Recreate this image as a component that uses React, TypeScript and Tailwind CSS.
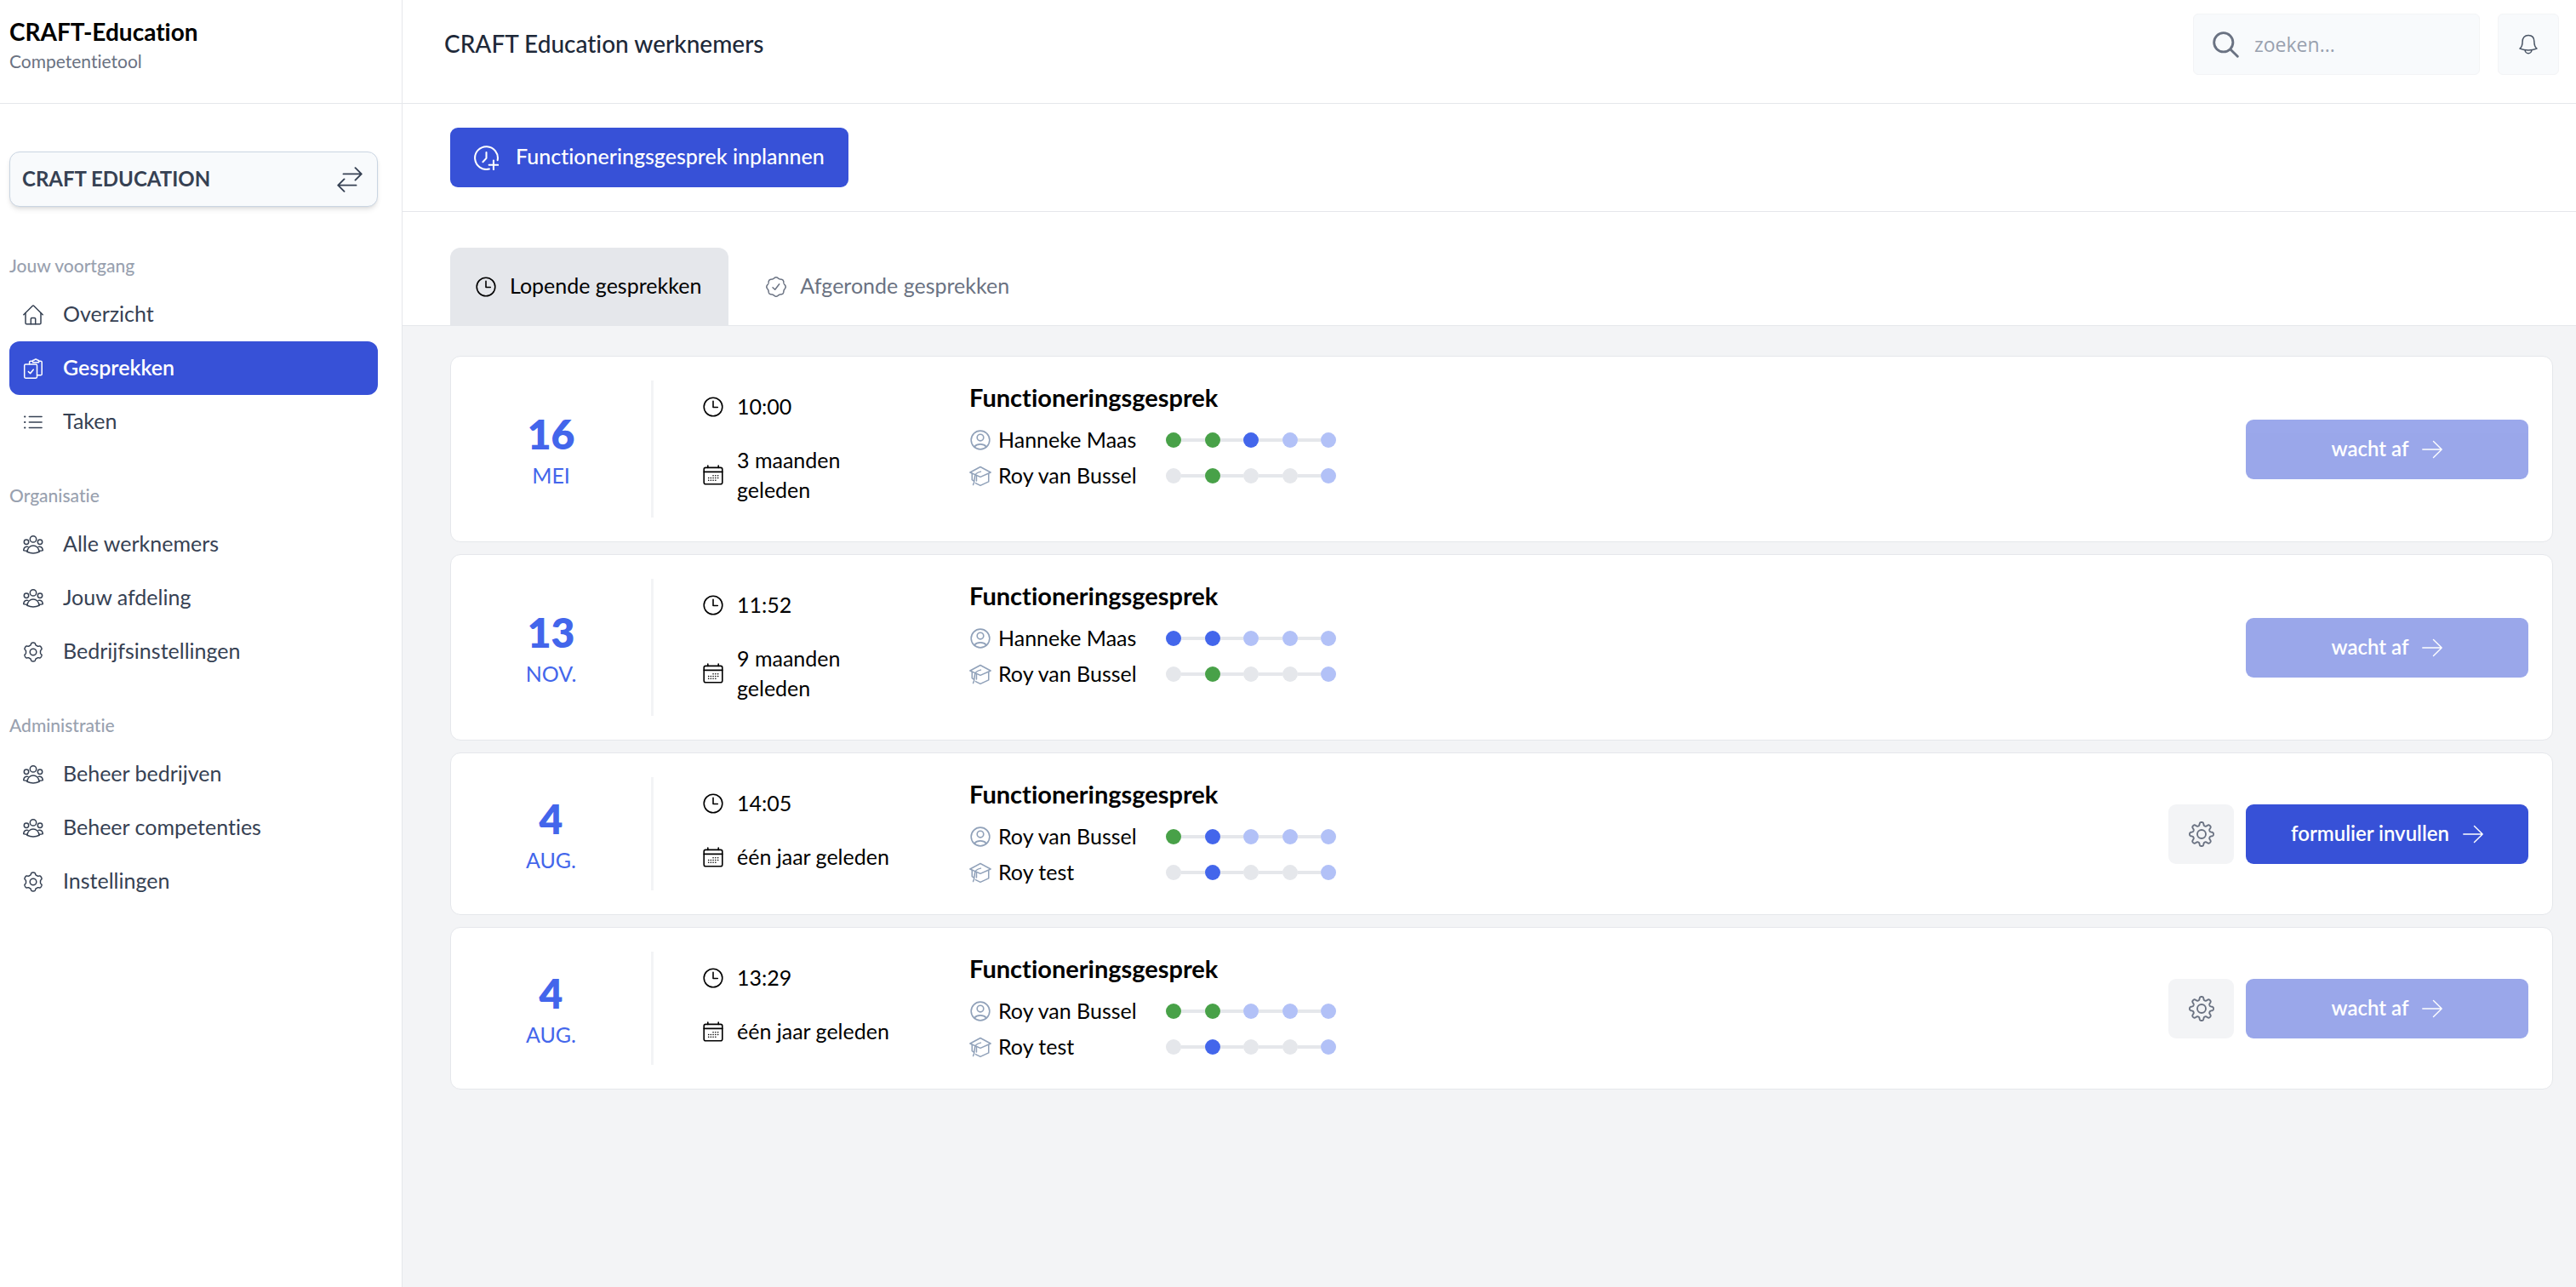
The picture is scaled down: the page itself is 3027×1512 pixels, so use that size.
import { ReactNode, useState } from 'react';
import clsx from 'clsx';

type IconProps = { className?: string };
type StepState = 'done' | 'active' | 'open' | 'none';
type Person = { name: string; steps: StepState[] };
type Meeting = {
  day: string;
  month: string;
  time: string;
  ago: string;
  employee: Person;
  coach: Person;
  action: 'wait' | 'fill';
  editable: boolean;
};

const meetings: Meeting[] = [
  {
    day: '16',
    month: 'MEI',
    time: '10:00',
    ago: '3 maanden geleden',
    employee: { name: 'Hanneke Maas', steps: ['done', 'done', 'active', 'open', 'open'] },
    coach: { name: 'Roy van Bussel', steps: ['none', 'done', 'none', 'none', 'open'] },
    action: 'wait',
    editable: false
  },
  {
    day: '13',
    month: 'NOV.',
    time: '11:52',
    ago: '9 maanden geleden',
    employee: { name: 'Hanneke Maas', steps: ['active', 'active', 'open', 'open', 'open'] },
    coach: { name: 'Roy van Bussel', steps: ['none', 'done', 'none', 'none', 'open'] },
    action: 'wait',
    editable: false
  },
  {
    day: '4',
    month: 'AUG.',
    time: '14:05',
    ago: 'één jaar geleden',
    employee: { name: 'Roy van Bussel', steps: ['done', 'active', 'open', 'open', 'open'] },
    coach: { name: 'Roy test', steps: ['none', 'active', 'none', 'none', 'open'] },
    action: 'fill',
    editable: true
  },
  {
    day: '4',
    month: 'AUG.',
    time: '13:29',
    ago: 'één jaar geleden',
    employee: { name: 'Roy van Bussel', steps: ['done', 'done', 'open', 'open', 'open'] },
    coach: { name: 'Roy test', steps: ['none', 'active', 'none', 'none', 'open'] },
    action: 'wait',
    editable: true
  }
];

// Closed outline with n rounded lobes around the centre of a 24x24 box
function lobes(n: number, radius: number, depth: number, sharpness: number) {
  const points: string[] = [];
  for (let i = 0; i < 240; i++) {
    const t = (i / 240) * Math.PI * 2;
    const r = radius + (depth * Math.tanh(sharpness * Math.cos(n * t))) / Math.tanh(sharpness);
    points.push(`${(12 + r * Math.sin(t)).toFixed(2)} ${(12 - r * Math.cos(t)).toFixed(2)}`);
  }
  return `M${points.join('L')}Z`;
}

function Icon({ className, width = 1.5, children }: IconProps & { width?: number; children: ReactNode }) {
  return (
    <svg
      viewBox="0 0 24 24"
      fill="none"
      stroke="currentColor"
      strokeWidth={width}
      strokeLinecap="round"
      strokeLinejoin="round"
      aria-hidden="true"
      className={className}
    >
      {children}
    </svg>
  );
}

const HomeIcon = ({ className }: IconProps) => (
  <Icon className={className}>
    <path d="M.8 11.8 11.1 1.5a1.3 1.3 0 0 1 1.8 0l10.3 10.3" />
    <path d="M3 9.8v11.7a1.3 1.3 0 0 0 1.3 1.3h15.4a1.3 1.3 0 0 0 1.3-1.3V9.8" />
    <path d="M9.3 22.7v-6a1.2 1.2 0 0 1 1.2-1.2h3a1.2 1.2 0 0 1 1.2 1.2v6" />
  </Icon>
);

const ClipboardsIcon = ({ className }: IconProps) => (
  <Icon className={className}>
    <rect x="1.7" y="7" width="14.8" height="16.2" rx="1.4" />
    <path d="m6.4 15.6 2.2 2.2 3.6-4.6" />
    <path d="M7.6 6.8V4.6a1.4 1.4 0 0 1 1.4-1.4h2.3" />
    <path d="M18.8 3.2h2a1.4 1.4 0 0 1 1.4 1.4v13.8a1.4 1.4 0 0 1-1.4 1.4h-4.2" />
    <path d="M11.5 4.8V3.2a1.2 1.2 0 0 1 1.2-1.2h.9a1.6 1.6 0 0 1 2.9 0h.9a1.2 1.2 0 0 1 1.2 1.2v1.6z" />
  </Icon>
);

const ListIcon = ({ className }: IconProps) => (
  <Icon className={className}>
    <path d="M7.3 5.6h14.8M7.3 12h14.8M7.3 18.4h14.8" />
    <path d="M2 5.6h.4M2 12h.4M2 18.4h.4" strokeWidth="2" />
  </Icon>
);

const PeopleIcon = ({ className }: IconProps) => (
  <Icon className={className}>
    <circle cx="12" cy="5.4" r="3.7" />
    <circle cx="4" cy="8.7" r="2.7" />
    <circle cx="20" cy="8.7" r="2.7" />
    <path d="M4.8 20.3c.6-4.4 3.500-7.300 7.200-7.300s6.600 2.900 7.200 7.300c-4.400 2-10 2-14.400 0z" />
    <path d="M5.900 14.400c-2.800-.9-4.900.8-5.200 4.200 1.300.5 2.600.6 4.100.6M18.100 14.400c2.800-.9 4.900.8 5.200 4.200-1.300.5-2.600.6-4.100.6" />
  </Icon>
);

const CogIcon = ({ className }: IconProps) => (
  <Icon className={className}>
    <path d={lobes(6, 9.7, 1.2, 2.2)} />
    <circle cx="12" cy="12" r="3.8" />
  </Icon>
);

const GearIcon = ({ className }: IconProps) => (
  <Icon className={className}>
    <path d={lobes(8, 9.7, 1.5, 1.8)} />
    <circle cx="12" cy="12" r="4" />
  </Icon>
);

const SwapIcon = ({ className }: IconProps) => (
  <Icon className={className}>
    <path d="M6 6.700h17M17.200.9 23 6.700l-5.800 5.800" />
    <path d="M18 17.300H1M6.800 11.500 1 17.300l5.800 5.800" />
  </Icon>
);

const SearchIcon = ({ className }: IconProps) => (
  <Icon className={className} width={2.2}>
    <circle cx="9.900" cy="9.900" r="8.600" />
    <path d="m16.200 16.200 6.500 6.500" />
  </Icon>
);

const BellIcon = ({ className }: IconProps) => (
  <Icon className={className}>
    <path d="M12 1.500c-4.300 0-6.900 2.900-6.900 7.400 0 4.200-.8 6.300-3.100 8.200 6.400 2.300 13.600 2.300 20 0-2.300-1.900-3.100-4-3.100-8.200 0-4.500-2.600-7.400-6.900-7.400z" />
    <path d="M8.200 18.900a3.800 3.800 0 0 0 7.600 0" />
  </Icon>
);

const ClockIcon = ({ className }: IconProps) => (
  <Icon className={className} width={1.6}>
    <circle cx="12" cy="12" r="10.800" />
    <path d="M12 5.200V12.500h5.300" />
  </Icon>
);

const ClockPlusIcon = ({ className }: IconProps) => (
  <Icon className={className} width={1.7}>
    <path d="M22.900 14.200A11.100 11.100 0 1 0 14.800 22.800" />
    <path d="M12 6.700v5.600l-3.400 3.600" />
    <path d="M19 14.500v8.800M14.600 18.900h8.800" />
  </Icon>
);

const BadgeIcon = ({ className }: IconProps) => (
  <Icon className={className}>
    <path d={lobes(8, 10.600, 0.6, 0.4)} />
    <path d="m8 12.700 2.700 2.600 5-6.500" />
  </Icon>
);

const CalendarIcon = ({ className }: IconProps) => (
  <Icon className={className} width={1.6}>
    <rect x="1.200" y="3.400" width="21.600" height="19.400" rx="2" />
    <path d="M1.200 8.400h21.600M5.800 1v2.400M18.200 1v2.400" />
    <path
      d="M12 12.700h.1M14.800 12.700h.1M17.600 12.700h.1M6.600 15.500h.1M9.300 15.500h.1M12 15.500h.1M14.800 15.500h.1M17.600 15.500h.1M6.600 18.300h.1M9.300 18.300h.1M12 18.300h.1M14.800 18.300h.1"
      strokeWidth="1.500"
    />
  </Icon>
);

const UserIcon = ({ className }: IconProps) => (
  <Icon className={className}>
    <circle cx="12" cy="12" r="10" />
    <circle cx="12" cy="9.300" r="3.500" />
    <path d="M5.400 19.300c3.200-3.700 10-3.700 13.200 0" />
  </Icon>
);

const GraduationIcon = ({ className }: IconProps) => (
  <Icon className={className} width={1.400}>
    <path d="M12 2.300.8 8.300 12 13.300l11.200-5z" />
    <path d="M21 10v8.300l-9 4.200-5.200-2.600" />
    <path d="M12.400 7.500C8.700 8.200 6 10 5.800 13.500l-.6 5.300M3 9.800v6.500l2.200 1.500M7.800 12.500v5M5 19.500l-.8 2.300" />
  </Icon>
);

const ArrowIcon = ({ className }: IconProps) => (
  <Icon className={className} width={1.400}>
    <path d="M.8 12h22.400M13.500 2.500l9.700 9.500-9.700 9.500" />
  </Icon>
);

const navigation = [
  {
    title: 'Jouw voortgang',
    items: [
      { label: 'Overzicht', icon: HomeIcon },
      { label: 'Gesprekken', icon: ClipboardsIcon },
      { label: 'Taken', icon: ListIcon }
    ]
  },
  {
    title: 'Organisatie',
    items: [
      { label: 'Alle werknemers', icon: PeopleIcon },
      { label: 'Jouw afdeling', icon: PeopleIcon },
      { label: 'Bedrijfsinstellingen', icon: CogIcon }
    ]
  },
  {
    title: 'Administratie',
    items: [
      { label: 'Beheer bedrijven', icon: PeopleIcon },
      { label: 'Beheer competenties', icon: PeopleIcon },
      { label: 'Instellingen', icon: CogIcon }
    ]
  }
];

function Sidebar() {
  const current = 'Gesprekken';

  return (
    <aside className="w-[473px] shrink-0 border-r border-gray-200 bg-white">
      <div className="h-[122px] border-b border-gray-200 pl-[11px] pt-[17px]">
        <div className="text-[28px] leading-[40px] font-bold text-black">CRAFT-Education</div>
        <div className="text-[21px] leading-[30px] text-gray-500">Competentietool</div>
      </div>

      <div className="pl-[11px] pr-7 pt-14">
        <button className="flex h-[65px] w-full items-center justify-between rounded-xl border border-slate-300 bg-slate-50 pl-[14px] pr-[17px] text-gray-700 shadow-md">
          <span className="pb-[2px] text-[24px] font-bold">CRAFT EDUCATION</span>
          <SwapIcon className="size-[30px]" />
        </button>

        <nav className="mt-[54px] flex flex-col gap-10">
          {navigation.map((section) => (
            <section key={section.title}>
              <h2 className="mb-[11px] text-[21px] leading-[30px] font-medium text-gray-400">{section.title}</h2>
              {section.items.map(({ label, icon: ItemIcon }) => (
                <a
                  key={label}
                  href="#"
                  className={clsx(
                    'flex h-[63px] items-center gap-[23px] rounded-xl px-4 text-[25px]',
                    label === current ? 'bg-[#3751d7] font-semibold text-white' : 'text-gray-700'
                  )}
                >
                  <ItemIcon className="size-6" />
                  <span className="pb-[2px]">{label}</span>
                </a>
              ))}
            </section>
          ))}
        </nav>
      </div>
    </aside>
  );
}

function Header() {
  return (
    <header className="flex h-[122px] items-start justify-between border-b border-gray-200 bg-white pl-[49px] pr-5 pt-4">
      <h1 className="pt-[17px] text-[28px] leading-[36px] font-medium text-gray-800">CRAFT Education werknemers</h1>
      <div className="flex gap-[21px]">
        <label className="flex h-[72px] w-[337px] items-center gap-[18px] rounded-md border border-gray-100 bg-slate-50 pl-[22px] text-gray-500">
          <SearchIcon className="size-[31px] shrink-0" />
          <input
            type="search"
            aria-label="Zoeken"
            placeholder="zoeken..."
            className="min-w-0 flex-1 bg-transparent font-['Open_Sans',sans-serif] text-[23px] outline-none placeholder:text-gray-400"
          />
        </label>
        <button
          aria-label="Meldingen"
          className="flex size-[72px] items-center justify-center rounded-md border border-gray-100 bg-slate-50 text-gray-600"
        >
          <BellIcon className="size-6" />
        </button>
      </div>
    </header>
  );
}

const stepColors: Record<StepState, string> = {
  done: 'bg-[#48a148]',
  active: 'bg-[#4366eb]',
  open: 'bg-[#b2c1f7]',
  none: 'bg-gray-200'
};

function Steps({ steps }: { steps: StepState[] }) {
  return (
    <div className="flex w-[200px] items-center">
      {steps.map((step, i) => (
        <div key={i} className={clsx('flex items-center', i > 0 && 'flex-1')}>
          {i > 0 && <div className="h-1 flex-1 bg-gray-200" />}
          <div className={clsx('size-[18px] rounded-full', stepColors[step])} />
        </div>
      ))}
    </div>
  );
}

function PersonRow({ person, icon: RowIcon }: { person: Person; icon: (props: IconProps) => ReactNode }) {
  return (
    <div className="flex h-[42px] items-center">
      <div className="flex w-[231px] items-center gap-2">
        <RowIcon className="size-[26px] text-slate-400" />
        <span className="pb-[2px] text-[25px] leading-[36px]">{person.name}</span>
      </div>
      <Steps steps={person.steps} />
    </div>
  );
}

function MeetingCard({ meeting }: { meeting: Meeting }) {
  return (
    <article className="flex rounded-xl border border-gray-200 bg-white p-7 pl-0 text-black">
      <div className="flex w-[238px] flex-col items-center justify-center border-r-[3px] border-gray-100 pt-2 text-[#4366eb]">
        <div className="text-[48px] leading-[48px] font-extrabold">{meeting.day}</div>
        <div className="pt-1 text-[25px] leading-[40px]">{meeting.month}</div>
      </div>

      <div className="ml-[58px] flex min-h-[133px] w-[226px] flex-col gap-7 pb-[15px] pt-[13px] text-[25px] leading-[35px]">
        <div className="flex items-center gap-4">
          <ClockIcon className="size-6 shrink-0" />
          <span>{meeting.time}</span>
        </div>
        <div className="flex items-center gap-4">
          <CalendarIcon className="size-6 shrink-0" />
          <span>{meeting.ago}</span>
        </div>
      </div>

      <div className="ml-[87px]">
        <h3 className="mb-[9px] text-[29px] leading-[40px] font-bold">Functioneringsgesprek</h3>
        <PersonRow person={meeting.employee} icon={UserIcon} />
        <PersonRow person={meeting.coach} icon={GraduationIcon} />
      </div>

      <div className="ml-auto flex items-center gap-[14px]">
        {meeting.editable && (
          <button
            aria-label="Instellingen"
            className="flex h-[70px] w-[77px] items-center justify-center rounded-[9px] bg-gray-100 text-gray-500"
          >
            <GearIcon className="size-[30px]" />
          </button>
        )}
        <button
          disabled={meeting.action === 'wait'}
          className="flex h-[70px] w-[332px] items-center justify-center gap-4 rounded-[9px] bg-[#3751d7] text-[24px] font-semibold text-white disabled:opacity-50"
        >
          <span className="pb-[2px]">{meeting.action === 'wait' ? 'wacht af' : 'formulier invullen'}</span>
          <ArrowIcon className="size-6" />
        </button>
      </div>
    </article>
  );
}

export default function App() {
  const [tab, setTab] = useState<'open' | 'closed'>('open');
  const tabs = [
    { id: 'open' as const, label: 'Lopende gesprekken', icon: ClockIcon },
    { id: 'closed' as const, label: 'Afgeronde gesprekken', icon: BadgeIcon }
  ];

  return (
    <div className="flex min-h-screen bg-gray-100 font-[Lato,sans-serif] [font-variant-ligatures:none]">
      <Sidebar />
      <main className="min-w-0 flex-1">
        <Header />

        <div className="border-b border-gray-200 bg-white px-14 py-7">
          <button className="flex h-[70px] items-center gap-5 rounded-[9px] bg-[#3751d7] px-7 text-[25px] font-medium text-white">
            <ClockPlusIcon className="size-[29px]" />
            <span className="pb-[2px]">Functioneringsgesprek inplannen</span>
          </button>
        </div>

        <div role="tablist" className="flex gap-[14px] border-b border-gray-200 bg-white px-14 pt-[42px]">
          {tabs.map(({ id, label, icon: TabIcon }) => (
            <button
              key={id}
              role="tab"
              aria-selected={tab === id}
              onClick={() => setTab(id)}
              className={clsx(
                'flex h-[91px] items-center gap-4 rounded-t-xl pl-[30px] pr-8 text-[25px]',
                tab === id ? 'bg-gray-200 text-black' : 'text-gray-500'
              )}
            >
              <TabIcon className="size-6" />
              <span className="pb-[2px]">{label}</span>
            </button>
          ))}
        </div>

        <div className="flex flex-col gap-[14px] pb-14 pl-14 pr-[27px] pt-[35px]">
          {meetings.map((meeting, i) => (
            <MeetingCard key={i} meeting={meeting} />
          ))}
        </div>
      </main>
    </div>
  );
}
